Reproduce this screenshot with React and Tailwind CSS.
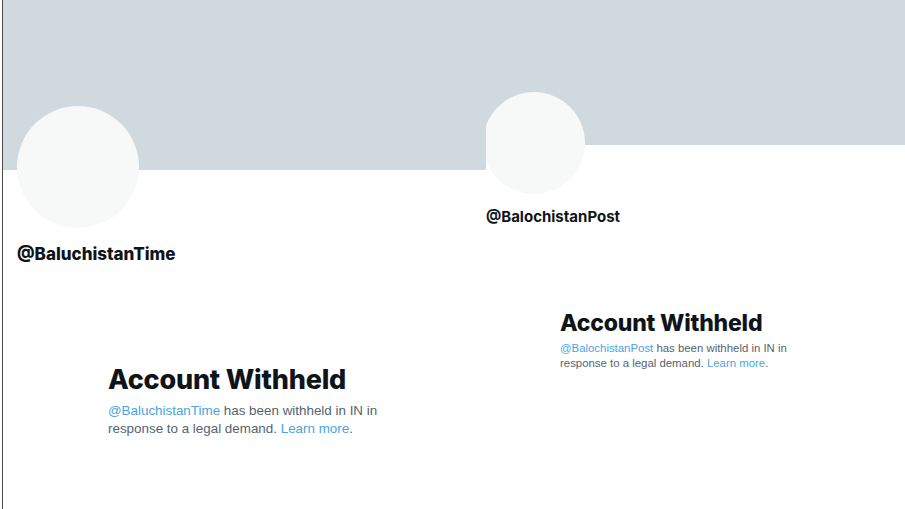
import React from 'react'

const font = { fontFamily: 'Inter, "Noto Sans", "Liberation Sans", sans-serif' }
const bodyFont = { fontFamily: '"Liberation Sans", Arial, sans-serif' }

function LeftProfile() {
  return (
    <div className="flex w-[483px] shrink-0 flex-col overflow-hidden bg-white">
      <div className="h-[170px] bg-[#cfd9de]" />
      <div className="ml-[14px] mt-[-64px] h-[122px] w-[122px] rounded-full bg-[#f7f9f9]" />
      <div className="ml-[14px] mt-[16px] text-[17px] font-extrabold leading-[20px] text-[#0f1419]">
        @BaluchistanTime
      </div>
      <div className="ml-[105px] mt-[100px]">
        <h2 className="text-[27px] font-extrabold leading-[32px] tracking-[-0.2px] text-[#0f1419]">
          Account Withheld
        </h2>
        <p className="mt-[6px] text-[13.4px] leading-[18px] text-[#536471]" style={bodyFont}>
          <span className="text-[#4ba3e0]">@BaluchistanTime</span> has been withheld in IN in
          <br />
          response to a legal demand. <span className="text-[#4ba3e0]">Learn more</span>.
        </p>
      </div>
    </div>
  )
}

function RightProfile() {
  return (
    <div className="flex flex-1 flex-col overflow-hidden bg-white">
      <div className="h-[145px] bg-[#cfd9de]" />
      <div className="ml-[-3px] mt-[-53px] h-[102px] w-[102px] rounded-full bg-[#f7f9f9]" />
      <div className="mt-[14px] text-[15px] font-bold leading-[18px] text-[#0f1419]">
        @BalochistanPost
      </div>
      <div className="ml-[74px] mt-[84px]">
        <h2 className="text-[23px] font-extrabold leading-[27px] tracking-[-0.2px] text-[#0f1419]">
          Account Withheld
        </h2>
        <p className="mt-[4px] text-[11.4px] leading-[15px] text-[#536471]" style={bodyFont}>
          <span className="text-[#4ba3e0]">@BalochistanPost</span> has been withheld in IN in
          <br />
          response to a legal demand. <span className="text-[#4ba3e0]">Learn more</span>.
        </p>
      </div>
    </div>
  )
}

export default function App() {
  return (
    <div className="flex h-[509px] w-[905px] overflow-hidden bg-white" style={font}>
      <div className="w-[2px] shrink-0 bg-white" />
      <div className="w-[1px] shrink-0 bg-[#4a4a4a]" />
      <LeftProfile />
      <RightProfile />
    </div>
  )
}
